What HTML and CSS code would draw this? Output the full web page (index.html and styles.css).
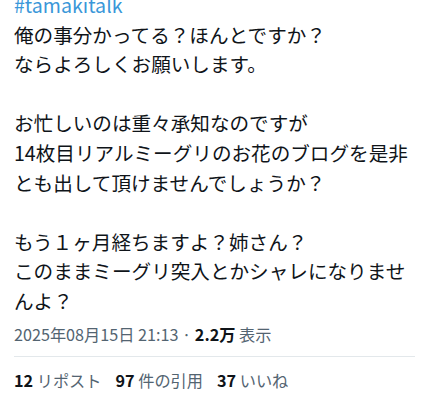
FILE: index.html
```html
<!DOCTYPE html>
<html lang="ja">
<head>
    <meta charset="UTF-8">
    <meta name="viewport" content="width=device-width, initial-scale=1.0">
    <title>Post</title>
    <link rel="stylesheet" href="styles.css">
</head>
<body>
    <div class="post">
        <div class="post-text">
            <a class="hashtag" href="#">#tamakitalk</a><br>
            俺の事分かってる？ほんとですか？<br>
            ならよろしくお願いします。<br>
            <br>
            お忙しいのは重々承知なのですが<br>
            14枚目リアルミーグリのお花のブログを是非<br>
            とも出して頂けませんでしょうか？<br>
            <br>
            もう１ヶ月経ちますよ？姉さん？<br>
            このままミーグリ突入とかシャレになりませ<br>
            んよ？
        </div>

        <div class="post-meta">
            2025年08月15日 21:13 · <b>2.2万</b> 表示
        </div>

        <div class="post-stats">
            <span><b>12</b> リポスト</span>
            <span><b>97</b> 件の引用</span>
            <span><b>37</b> いいね</span>
        </div>
    </div>
</body>
</html>
```

FILE: styles.css
```css
body {
    margin: 0;
    padding: 0;
    background-color: #fff;
    font-family: "Noto Sans CJK JP", "Noto Sans", sans-serif;
    color: #0f1419;
}

.post {
    padding: 0 13px 0 14px;
}

.post-text {
    margin-top: -10px;
    font-size: 19.6px;
    line-height: 29.6px;
}

.hashtag {
    color: #3a97d9;
    text-decoration: none;
}

.post-meta {
    margin-top: 8px;
    padding-bottom: 11px;
    border-bottom: 1px solid #e3e8eb;
    font-size: 16.2px;
    line-height: 21px;
    color: #536471;
}

.post-meta b {
    color: #0f1419;
}

.post-stats {
    display: flex;
    gap: 14px;
    padding-top: 13px;
    font-size: 16.2px;
    line-height: 21px;
    color: #536471;
}

.post-stats b {
    color: #0f1419;
}
```
